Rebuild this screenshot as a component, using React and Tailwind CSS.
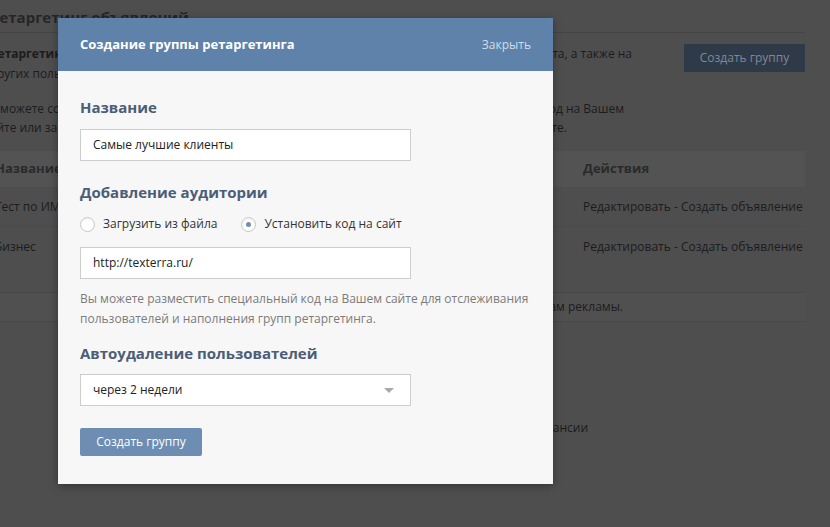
function Radio({ checked, label }) {
  return (
    <label className="flex items-center gap-2">
      <span className="w-[15px] h-[15px] rounded-full border border-[#c8c8c8] bg-white flex items-center justify-center shadow-[inset_0_1px_2px_rgba(0,0,0,0.08)]">
        {checked && <span className="w-[5px] h-[5px] rounded-full bg-[#6f8fb5]" />}
      </span>
      <span>{label}</span>
    </label>
  )
}

function Field({ value, select }) {
  return (
    <div className="w-[331px] h-[32px] bg-white border border-[#cdcdcd] flex items-center px-3 text-[#222]">
      <span className="flex-1">{value}</span>
      {select && <span className="w-0 h-0 border-l-[5px] border-r-[5px] border-t-[5px] border-l-transparent border-r-transparent border-t-[#a9a9a9] mr-1" />}
    </div>
  )
}

export default function App() {
  return (
    <div className="relative w-[830px] h-[527px] overflow-hidden bg-[#4e4e4e] text-[12px] text-[#1c1c1c]" style={{ fontFamily: '"Open Sans", "DejaVu Sans", sans-serif' }}>
      {/* dimmed page behind the dialog */}
      <div className="ml-[-10px] w-[815px] whitespace-nowrap">
        <div className="h-[33px] border-b border-[#444] pt-[6px] text-[15px] font-bold text-[#262626]">Ретаргетинг объявлений</div>
        <div className="flex justify-between pt-[11px]">
          <div className="w-[642px] leading-[20px]">
            <div className="flex justify-between">
              <span><b>Ретаргетинг</b> позволяет показывать рекламу</span>
              <span>посетителям Вашего сайта, а также на</span>
            </div>
            <div>других пользователей</div>
          </div>
          <div className="h-[28px] w-[121px] bg-[#2f3a48] text-[#7d8898] flex items-center justify-center text-[12px]">Создать группу</div>
        </div>
        <div className="pt-[15px] leading-[19px] ml-[-10px]">
          <div className="w-[644px] flex justify-between">
            <span>Вы можете создать группу,</span>
            <span>установив специальный код на Вашем</span>
          </div>
          <div className="w-[587px] flex justify-between pl-[4px]">
            <span>сайте или загрузить</span>
            <span>список из файла на сайте.</span>
          </div>
        </div>
        <div className="mt-[14px] ml-[4px]">
          <div className="h-[36px] bg-[#535353] flex items-center font-bold text-[13px] text-[#2a2a2a]">
            <span className="w-[589px] pl-[1px]">Название</span>
            <span>Действия</span>
          </div>
          <div className="h-[40px] border-b border-[#4a4a4a] flex items-center">
            <span className="w-[589px] pl-[1px]">Тест по ИМ</span>
            <span>Редактировать - Создать объявление</span>
          </div>
          <div className="h-[40px] flex items-center">
            <span className="w-[589px] pl-[1px]">Бизнес</span>
            <span>Редактировать - Создать объявление</span>
          </div>
        </div>
        <div className="mt-[25px] h-[30px] border-t border-b border-[#474747] bg-[#505050] flex items-center">
          <span className="w-[633px] pl-[80px] text-right">Группы ретаргетинга можно использовать по типам рекламы.</span>
        </div>
        <div className="mt-[97px] pl-[543px]">вакансии</div>
      </div>

      {/* dialog */}
      <div className="absolute left-[58px] top-[18px] w-[495px] h-[466px] bg-[#f7f7f7] shadow-[0_2px_8px_rgba(0,0,0,0.35)]">
        <div className="h-[53px] bg-[#5e82a9] flex items-center justify-between px-[22px]">
          <span className="text-white font-bold text-[13px]">Создание группы ретаргетинга</span>
          <span className="text-[#d2dcea] text-[12px]">Закрыть</span>
        </div>
        <div className="px-[22px] pt-[26px] text-[#2b2b2b]">
          <div className="text-[15px] font-bold text-[#4b5d77] leading-[20px]">Название</div>
          <div className="mt-[12px]"><Field value="Самые лучшие клиенты" /></div>
          <div className="mt-[21px] text-[15px] font-bold text-[#4b5d77] leading-[20px]">Добавление аудитории</div>
          <div className="mt-[13px] flex gap-[24px] text-[#333] leading-[18px]">
            <Radio label="Загрузить из файла" />
            <Radio checked label="Установить код на сайт" />
          </div>
          <div className="mt-[14px]"><Field value="http://texterra.ru/" /></div>
          <div className="mt-[10px] text-[#7b7b7b] leading-[20px]">
            Вы можете разместить специальный код на Вашем сайте для отслеживания<br />
            пользователей и наполнения групп ретаргетинга.
          </div>
          <div className="mt-[14px] text-[15px] font-bold text-[#4b5d77] leading-[20px]">Автоудаление пользователей</div>
          <div className="mt-[11px]"><Field value="через 2 недели" select /></div>
          <button className="mt-[22px] h-[28px] w-[122px] rounded-[2px] bg-[#6d8db3] text-white text-[12px]">Создать группу</button>
        </div>
      </div>
    </div>
  )
}
